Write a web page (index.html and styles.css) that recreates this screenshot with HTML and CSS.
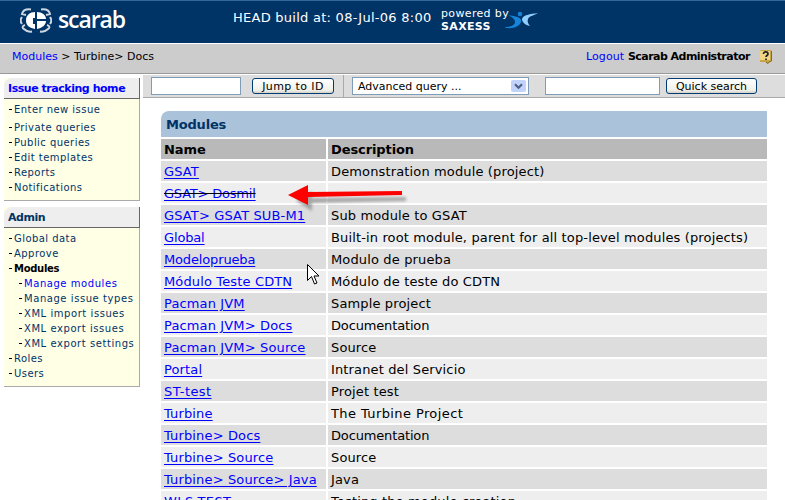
FILE: index.html
```html
<!DOCTYPE html>
<html lang="en">
<head>
<meta charset="utf-8">
<title>Scarab - Modules</title>
<link rel="stylesheet" href="styles.css">
</head>
<body>
<header class="banner">
  <svg class="beetle" width="32" height="26" viewBox="0 0 32 26" fill="none" stroke="#fff">
    <path d="M15 4C10 4 6 7 6 12.500S10 20 15 21v-5h-2v-6h2zM17 4c5 0 9 3 9 7H17zM17 13h9c0 4-4 7-9 8z" fill="#fff" stroke="none"/>
    <path d="M11 1.500C7 1 3 2 2 6l4 1M2 9c-1.500 2-1.500 5 0 7M5 17c-3 1-3 3-1 4 2 2 5 3 8 2.500M21 1.500c4-.5 8 .5 9 4.500l-4 1M30 9c1.500 2 1.500 5 0 7M27 17c3 1 3 3 1 4-2 2-5 3-8 2.500" stroke-width="2" opacity=".8"/>
  </svg>
  <span class="brand">scarab</span>
  <span class="build">HEAD build at: 08-Jul-06 8:00</span>
  <div class="powered"><span class="by">powered by</span><b>SAXESS</b></div>
  <svg class="runner" width="34" height="19" viewBox="0 0 34 19">
    <path d="M3 4c6 1 12 2 13 5 1 5-6 9-15 8l-1-1c6 0 10-2 10-5 0-3-3-5-7-7z" fill="#1684d8"/>
    <circle cx="15" cy="3" r="2.200" fill="#1684d8"/>
    <path d="M33 2c-5 3-9 3-10 6-1 2 0 5 2 7-5-1-8-4-8-7 1-4 8-5 16-6z" fill="#8fcfff"/>
  </svg>
</header>
<nav class="crumbs">
  <span class="path"><a>Modules</a> &gt; Turbine&gt; Docs</span>
  <span class="user"><a>Logout</a> <b>Scarab Administrator</b></span>
  <svg class="help" width="14" height="16" viewBox="0 0 14 16"><path d="M1 2 2 1h9l2 1v10l-3 1-1 2-3-2H1z" fill="#c9a445"/><path d="M1 2h10v9H1z" fill="#efd584"/><path d="M12.500 2v10L10 13l-1 1.500L7 13" stroke="#8a6a20" fill="none"/><path d="M4.500 5c0-3 4.500-2.500 4.500 0 0 1.500-2 1.500-2 3M7 9.500v1.500" fill="none" stroke="#222" stroke-width="1.700"/></svg>
</nav>
<div class="page">
  <aside>
    <section class="box">
      <h2 class="current">Issue tracking home</h2>
      <ul>
        <li class="first">Enter new issue</li>
        <li>Private queries</li><li>Public queries</li><li>Edit templates</li><li>Reports</li><li>Notifications</li>
      </ul>
    </section>
    <section class="box admin">
      <h2>Admin</h2>
      <ul>
        <li>Global data</li><li>Approve</li><li class="open">Modules</li>
        <li class="sub active">Manage modules</li><li class="sub">Manage issue types</li><li class="sub">XML import issues</li><li class="sub">XML export issues</li><li class="sub">XML export settings</li>
        <li>Roles</li><li>Users</li>
      </ul>
    </section>
  </aside>
  <main>
    <form class="tools">
      <div class="field id"></div><div class="button jump">Jump to ID</div>
      <i class="rule"></i>
      <div class="field select"><span>Advanced query ...</span><span class="drop"><svg width="9" height="7" viewBox="0 0 9 7"><path d="M1 1.2 4.500 4.700 8 1.200" fill="none" stroke="#4d6185" stroke-width="2.200"/></svg></span></div>
      <div class="field search"></div><div class="button quick">Quick search</div>
    </form>
    <div class="listing">
      <h1>Modules</h1>
      <div class="row head"><span>Name</span><span>Description</span></div>
      <div class="row"><span><a>GSAT</a></span><span>Demonstration module (project)</span></div>
      <div class="row"><span><del><a>GSAT&gt; Dosmil</a></del></span><span></span></div>
      <div class="row"><span><a>GSAT&gt; GSAT SUB-M1</a></span><span>Sub module to GSAT</span></div>
      <div class="row"><span><a class="tight">Global</a></span><span>Built-in root module, parent for all top-level modules (projects)</span></div>
      <div class="row"><span><a class="tight">Modeloprueba</a></span><span>Modulo de prueba</span></div>
      <div class="row"><span><a>Módulo Teste CDTN</a></span><span>Módulo de teste do CDTN</span></div>
      <div class="row"><span><a>Pacman JVM</a></span><span>Sample project</span></div>
      <div class="row"><span><a>Pacman JVM&gt; Docs</a></span><span class="tight">Documentation</span></div>
      <div class="row"><span><a>Pacman JVM&gt; Source</a></span><span>Source</span></div>
      <div class="row"><span><a>Portal</a></span><span>Intranet del Servicio</span></div>
      <div class="row"><span><a class="wide">ST-test</a></span><span>Projet test</span></div>
      <div class="row"><span><a>Turbine</a></span><span class="wide">The Turbine Project</span></div>
      <div class="row"><span><a>Turbine&gt; Docs</a></span><span class="tight">Documentation</span></div>
      <div class="row"><span><a>Turbine&gt; Source</a></span><span>Source</span></div>
      <div class="row"><span><a>Turbine&gt; Source&gt; Java</a></span><span>Java</span></div>
      <div class="row"><span><a class="wide">WLS-TEST</a></span><span>Testing the module creation</span></div>
    </div>
  </main>
</div>
<svg class="arrow" width="126" height="32" viewBox="0 0 126 32">
  <path d="M4 13 20 3v7l94-1v4l-94 2v8z" fill="#777" opacity=".6" transform="translate(4 5)" class="shade"/>
  <path d="M0 12 20 2v7l94-1v4l-94 2v8z" fill="#fe0000"/>
</svg>
<svg class="pointer" width="13" height="22" viewBox="0 0 13 22"><path d="M.5.500v16l4-4 3 7.500 2.500-1-3-7h5z" fill="#fff" stroke="#000"/></svg>
</body>
</html>
```
FILE: styles.css
```css
* { box-sizing: border-box; }
body { margin: 0; width: 785px; height: 500px; overflow: hidden; position: relative; background: #fff; color: #000; font: 10px/15px "DejaVu Sans", sans-serif; }
a { color: #00f; }
h1, h2, ul { margin: 0; padding: 0; }
.banner { height: 44px; background: #036; border-top: 1px solid #369; border-bottom: 1px solid #fff; color: #fff; display: flex; align-items: flex-start; padding-left: 20px; }
.beetle { margin-top: 7px; flex: none; }
.brand { font: 600 23px/26px "Open Sans", sans-serif; letter-spacing: -1.1px; margin: 5px 0 0 6px; width: 175px; }
.build { font-size: 13px; line-height: 18px; margin-top: 8px; width: 208px; white-space: nowrap; letter-spacing: .26px; }
.powered { font-size: 11px; line-height: 13px; margin-top: 6px; width: 64px; white-space: nowrap; letter-spacing: .35px; }
.by, .powered b { display: block; }
.runner { margin-top: 10px; }
.crumbs { height: 30px; background: #ccc; border-bottom: 1px solid #999; display: flex; padding: 5px 12px 0; font-size: 11px; line-height: 16px; }
.path { flex: 1; }
.user { width: 173px; white-space: nowrap; letter-spacing: .1px; }
.user b { letter-spacing: -.53px; }
.page { display: flex; padding-left: 4px; }
aside { width: 136px; padding-top: 4px; }
.box { border-right: 1px solid #aaa; border-bottom: 1px solid #aaa; background: #ffffe6; height: 123px; margin-bottom: 6px; }
.admin { height: 180px; }
h2 { height: 21px; width: 136px; background: #eee; border-right: 1px solid #666; border-bottom: 1px solid #666; border-top-left-radius: 8px; color: #036; font-size: 11px; line-height: 21px; padding-left: 4px; white-space: nowrap; letter-spacing: -.46px; }
h2.current { color: #00f; }
ul { list-style: none; padding-top: 3px; }
li { height: 15px; padding-left: 4px; color: #036; white-space: nowrap; display: flex; letter-spacing: .45px; }
li::before { content: ""; width: 3px; height: 1px; background: #000; margin: 7px 2px 0 1px; flex: none; }
li.first { height: 18px; }
.sub { padding-left: 14px; letter-spacing: .56px; }
.active { color: #00f; }
.open { color: #000; font-weight: bold; letter-spacing: -.3px; }
main { margin-left: 3px; flex: 1; }
.tools { height: 23px; margin-top: 1px; background: #ddd; border-bottom: 1px solid #aaa; display: flex; font-size: 11px; padding-left: 8px; }
.field { height: 18px; margin-top: 2px; background: #fff; border: 1px solid #7f9db9; }
.id { width: 90px; margin-right: 11px; }
.button { height: 16px; margin-top: 3px; border: 1px solid #003c74; border-radius: 3px; background: linear-gradient(#fff, #f0f0ea 80%, #d6d0c5); line-height: 15px; text-align: center; white-space: nowrap; }
.jump { width: 82px; letter-spacing: .4px; }
.rule { width: 1px; background: #aaa; margin: 0 8px 0 9px; }
.select { width: 177px; margin-right: 16px; display: flex; justify-content: space-between; padding: 0 2px 0 5px; line-height: 17px; }
.drop { width: 15px; height: 12px; margin-top: 2px; background: #c1d3fb; border-radius: 2px; display: flex; align-items: center; justify-content: center; }
.search { width: 115px; margin-right: 6px; }
.quick { width: 91px; }
.listing { margin: 13px 18px 0; width: 606px; font-size: 13px; line-height: 21px; letter-spacing: .14px; }
h1 { height: 26px; background: #abc2db; border-top-left-radius: 8px; color: #036; font-size: 13px; line-height: 27px; padding-left: 5px; letter-spacing: -.2px; }
.row { display: grid; grid-template-columns: 165px 439px; gap: 2px; height: 20px; margin-top: 2px; white-space: nowrap; }
.row > span { background: #eee; padding-left: 3px; height: 20px; }
.row:nth-child(odd) > span { background: #ddd; }
.row.head > span { background: #b9b9b9; font-weight: bold; letter-spacing: -.1px; line-height: 22px; }
.row a { text-decoration: underline; text-underline-offset: 2px; }
.row .tight { letter-spacing: -.15px; }
.row .wide { letter-spacing: .4px; }
del { color: #000; letter-spacing: -.2px; }
.arrow { position: absolute; left: 288px; top: 183px; }
.shade { filter: blur(1.5px); }
.pointer { position: absolute; left: 307px; top: 264px; }
```
